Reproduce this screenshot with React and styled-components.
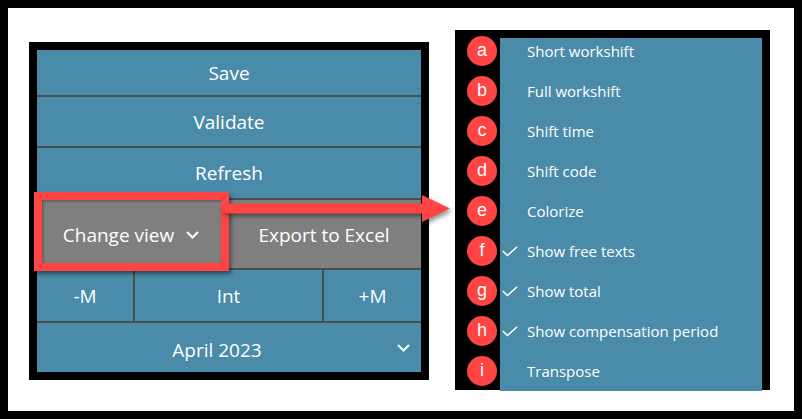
import React from 'react'
import styled, { createGlobalStyle } from 'styled-components'

const GlobalStyle = createGlobalStyle`
  body {
    margin: 0;
    background: #fff;
  }
`

const BLUE = '#4a8ba9'
const LINE = '#4d4d4d'
const GRAY = '#7f7f7f'
const RED = '#ff4444'

const Frame = styled.div`
  position: relative;
  width: 802px;
  height: 419px;
  box-sizing: border-box;
  border: 8px solid #000;
  background: #fff;
  display: flex;
  align-items: flex-start;
  gap: 26px;
  padding: 22px 0 0 21px;
  font-family: "Open Sans", "Noto Sans", sans-serif;
  color: #fff;
`

const LeftPanel = styled.div`
  margin-top: 12px;
  width: 400px;
  box-sizing: border-box;
  background: #000;
  padding: 8px;
`

const Stack = styled.div`
  display: flex;
  flex-direction: column;
  gap: 2px;
  background: ${LINE};
`

const Row = styled.div`
  height: ${p => p.$h}px;
  background: ${BLUE};
  display: flex;
  align-items: center;
  justify-content: center;
  font-size: 19px;
`

const SplitRow = styled.div`
  position: relative;
  height: ${p => p.$h}px;
  display: grid;
  grid-template-columns: ${p => p.$cols};
  gap: 2px;
`

const Cell = styled.div`
  background: ${p => (p.$gray ? GRAY : BLUE)};
  display: flex;
  align-items: center;
  justify-content: center;
  gap: 12px;
  font-size: 19px;
  padding-top: ${p => p.$down || 0}px;
`

const Highlight = styled.div`
  position: absolute;
  left: -3px;
  top: -8px;
  width: 195px;
  height: 79px;
  box-sizing: border-box;
  border: 8px solid ${RED};
  box-shadow: 2px 3px 4px rgba(0, 0, 0, 0.45), inset 1px 1px 3px rgba(0, 0, 0, 0.35);
  z-index: 2;
`

const MonthRow = styled.div`
  height: 49px;
  background: ${BLUE};
  display: grid;
  grid-template-columns: 1fr 24px;
  align-items: center;
  font-size: 19px;
`

const MonthLabel = styled.span`
  text-align: center;
  padding-top: 4px;
`

const RightPanel = styled.div`
  width: 315px;
  height: 360px;
  box-sizing: border-box;
  background: #000;
  padding: 8px;
  display: grid;
  grid-template-columns: 37px 1fr;
`

const BadgeColumn = styled.div`
  margin-top: -7px;
  display: flex;
  flex-direction: column;
`

const BadgeSlot = styled.div`
  height: 40px;
  display: flex;
  align-items: center;
  padding-left: 4px;
`

const Badge = styled.span`
  width: 30px;
  height: 30px;
  border-radius: 50%;
  background: ${RED};
  display: flex;
  align-items: center;
  justify-content: center;
  font-family: "Liberation Sans", Arial, sans-serif;
  font-size: 18px;
  line-height: 1;
  padding-bottom: 2px;
  box-sizing: border-box;
`

const Menu = styled.div`
  background: ${BLUE};
  overflow: hidden;
`

const MenuList = styled.div`
  margin-top: -7px;
`

const MenuItem = styled.div`
  height: 40px;
  display: flex;
  align-items: center;
  font-size: 15px;
`

const CheckCell = styled.span`
  width: 27px;
  padding-left: 2px;
  box-sizing: border-box;
  display: flex;
  align-items: center;
`

const ArrowSvg = styled.svg`
  position: absolute;
  left: 210px;
  top: 182px;
  overflow: visible;
  filter: drop-shadow(2px 3px 2px rgba(0, 0, 0, 0.4));
  z-index: 3;
`

const Chevron = ({ w = 13 }) => (
  <svg width={w} height="8" viewBox="0 0 13 8">
    <polyline points="1,1 6.5,6.5 12,1" fill="none" stroke="#fff" strokeWidth="2" />
  </svg>
)

const Check = () => (
  <svg width="16" height="11" viewBox="0 0 16 11">
    <polyline points="0.8,5 5.5,9.5 15.2,0.8" fill="none" stroke="#fff" strokeWidth="1.5" />
  </svg>
)

const items = [
  ['a', 'Short workshift', false],
  ['b', 'Full workshift', false],
  ['c', 'Shift time', false],
  ['d', 'Shift code', false],
  ['e', 'Colorize', false],
  ['f', 'Show free texts', true],
  ['g', 'Show total', true],
  ['h', 'Show compensation period', true],
  ['i', 'Transpose', false],
]

export default function App() {
  return (
    <>
      <GlobalStyle />
      <Frame>
        <LeftPanel>
          <Stack>
            <Row $h={45}>Save</Row>
            <Row $h={49}>Validate</Row>
            <Row $h={50}>Refresh</Row>
            <SplitRow $h={68} $cols="188px 1fr">
              <Cell $gray $down={2}>
                Change view <Chevron />
              </Cell>
              <Cell $gray $down={2}>Export to Excel</Cell>
              <Highlight />
            </SplitRow>
            <SplitRow $h={51} $cols="96px 1fr 97px">
              <Cell>-M</Cell>
              <Cell>Int</Cell>
              <Cell>+M</Cell>
            </SplitRow>
            <MonthRow>
              <MonthLabel>April 2023</MonthLabel>
              <Chevron />
            </MonthRow>
          </Stack>
        </LeftPanel>

        <RightPanel>
          <BadgeColumn>
            {items.map(([letter]) => (
              <BadgeSlot key={letter}>
                <Badge>{letter}</Badge>
              </BadgeSlot>
            ))}
          </BadgeColumn>
          <Menu>
            <MenuList>
              {items.map(([letter, label, checked]) => (
                <MenuItem key={letter}>
                  <CheckCell>{checked && <Check />}</CheckCell>
                  {label}
                </MenuItem>
              ))}
            </MenuList>
          </Menu>
        </RightPanel>

        <ArrowSvg width="236" height="38" viewBox="0 0 236 38">
          <path d="M9 13.5 H204 V5 L232 18.5 L204 32 V23.5 H9 A5 5 0 0 1 9 13.5 Z" fill={RED} />
        </ArrowSvg>
      </Frame>
    </>
  )
}
